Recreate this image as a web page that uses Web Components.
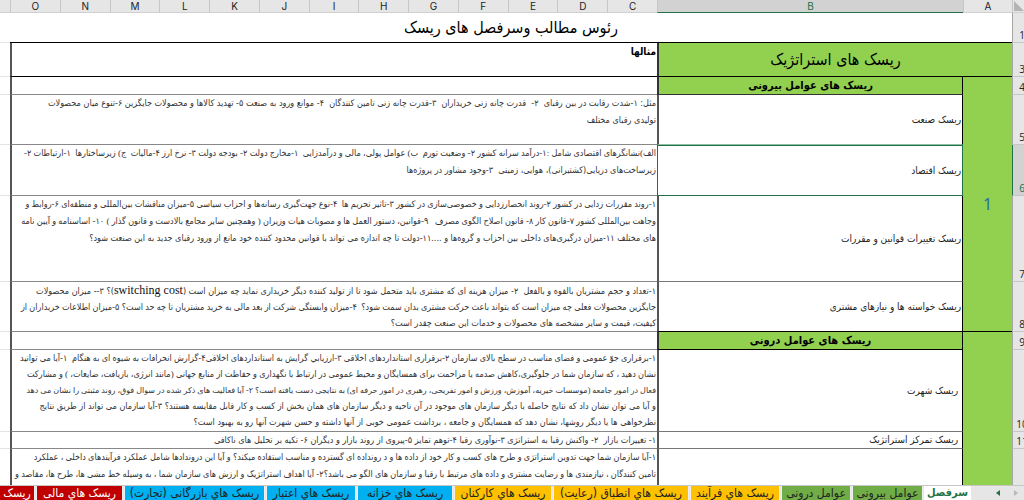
<!DOCTYPE html>
<html lang="fa">
<head>
<meta charset="utf-8">
<title>رئوس مطالب وسرفصل های ریسک</title>
<style>
  html, body { margin: 0; height: 100%; }
</style>
</head>
<body>
<risk-workbook></risk-workbook>

<template id="workbook-template">
  <style>
    :host { display: flex; flex-direction: column; height: 100vh; overflow: hidden; background: #fff; color: #222; font-family: "DejaVu Sans Condensed", "DejaVu Sans", sans-serif; }
    risk-sheet { flex: 1; min-height: 0; }
  </style>
  <risk-sheet></risk-sheet>
  <sheet-tabs>
    <sheet-tab active style="--w:47px">سرفصل</sheet-tab>
    <sheet-tab style="--w:71px;--c:#70ad47">عوامل بیرونی</sheet-tab>
    <sheet-tab style="--w:70px;--c:#70ad47">عوامل درونی</sheet-tab>
    <sheet-tab style="--w:90px;--c:#ffc000">ریسک هاي فرآیند</sheet-tab>
    <sheet-tab style="--w:136px;--c:#ffc000">ریسک هاي انطباق (رعایت)</sheet-tab>
    <sheet-tab style="--w:98px;--c:#ffc000">ریسک هاي کارکنان</sheet-tab>
    <sheet-tab style="--w:96px;--c:#00b0f0">ریسک هاي خزانه</sheet-tab>
    <sheet-tab style="--w:90px;--c:#00b0f0">ریسک هاي اعتبار</sheet-tab>
    <sheet-tab style="--w:141px;--c:#00b0f0">ریسک هاي بازرگانی (تجارت)</sheet-tab>
    <sheet-tab style="--w:87px;--c:#c00000;--t:#fff">ریسک هاي مالی</sheet-tab>
    <sheet-tab style="--w:36px;--c:#c00000;--t:#fff">ریسک</sheet-tab>
  </sheet-tabs>
</template>

<template id="sheet-template">
  <style>
    :host { display: block; overflow: hidden; direction: rtl; }
    table { width: 100%; table-layout: fixed; border-collapse: separate; border-spacing: 0; }
    th, td { box-sizing: border-box; padding: 0; font-weight: 400; }
    .rowcol { width: 12px; } .a { width: 49px; } .b { width: 306px; } .rest { width: 10px; }

    thead th { height: 13px; background: #e6e6e6; border-left: 1px solid #c6c6c6; border-bottom: 1px solid #d0d0d0; font: 10px/12px Inter, sans-serif; color: #222; }
    thead th.sel { background: #d2d2d2; color: #217346; border-bottom: 1px solid #217346; }
    thead th.rest { border-left: 0; }
    .corner svg { display: block; width: 10px; height: 10px; }

    tbody th { direction: ltr; overflow: hidden; background: #e6e6e6; border-left: 1px solid #a6a6a6; border-bottom: 1px solid #c6c6c6; vertical-align: bottom; font: 10px/14px "Open Sans", sans-serif; }
    tbody th span { display: block; width: 20px; text-align: center; }
    tbody th.sel { background: #d2d2d2; color: #217346; border-left: 1px solid #217346; }

    .title { font-size: 16px; line-height: 26px; text-align: center; border-bottom: 1px solid #000; color: #000; }
    .green { background: #92d050; text-align: center; color: #000; }
    .main { font-size: 16px; border-left: 2px solid #333; border-bottom: 1px solid #000; }
    .group { font-size: 11px; line-height: 16px; font-weight: 700; border-left: 2px solid #333; border-right: 1px solid #000; border-bottom: 1px solid #333; }
    .index { font: 16px/20px "Noto Sans", sans-serif; color: #1f6fb5; border-bottom: 1px solid #000; }
    .risk { font-size: 10px; line-height: 16px; border-left: 2px solid #555; border-right: 1px solid #000; border-bottom: 1px solid #777; padding-right: 1px; }
    .inset { padding-right: 4px; }
    .risk.sel { border: 1px solid #217346; }
    .risk.above { border-bottom-color: #8fc0a5; }
    .text { font-size: 9px; line-height: 17px; white-space: pre; vertical-align: top; border-left: 2px solid #555; border-bottom: 1px solid #888; padding-right: 1px; color: #333; }
    .tight { line-height: 16px; padding-top: 1px; }
    .dense { font-family: "Liberation Serif", "DejaVu Sans Condensed", serif; }
    .dense.small { font-family: "Liberation Serif", "DejaVu Sans", serif; font-size: 8px; line-height: 14px; }
    .heading { font-size: 10px; font-weight: 700; color: #000; }
    .strong { border-bottom-color: #000; }
    .blank { border-bottom: 1px solid #e4e4e4; }
    .latin { font-family: "Liberation Serif", serif; font-size: 12px; line-height: 14px; color: #111; }
  </style>
  <table>
    <colgroup>
      <col class="rowcol"><col class="a"><col class="b">
      <col span="13">
      <col class="rest">
    </colgroup>
    <thead></thead>
    <tbody>
      <tr style="height:30px"><th><span>1</span></th><td class="title" colspan="15">رئوس مطالب وسرفصل های ریسک</td><td class="blank"></td></tr>
      <tr style="height:34px"><th><span>3</span></th><td class="green main" colspan="2">ریسک های استراتژیک</td><td class="text heading strong" colspan="13">مثالها</td><td class="blank"></td></tr>
      <tr style="height:18px"><th><span>4</span></th><td class="green index" rowspan="5">1</td><td class="green group">ریسک های عوامل بیرونی</td><td class="text" colspan="13"></td><td class="blank"></td></tr>
      <tr style="height:50px"><th><span>5</span></th><td class="risk above">ریسک صنعت</td><td class="text" colspan="13">مثل: ۱-شدت رقابت در بین رقبای  ۲-  قدرت چانه زنی خریداران  ۳-قدرت چانه زنی تامین کنندگان  ۴- موانع ورود به صنعت ۵- تهدید کالاها و محصولات جایگزین ۶-تنوع میان محصولات<br>تولیدی رقبای مختلف</td><td class="blank"></td></tr>
      <tr style="height:51px"><th class="sel"><span>6</span></th><td class="risk sel">ریسک اقتصاد</td><td class="text" colspan="13"><span class="dense">الف)نشانگرهای اقتصادی شامل :۱-درآمد سرانه کشور ۲- وضعیت تورم  ب) عوامل پولی، مالی و درآمدزایی  ۱-مخارج دولت ۲- بودجه دولت ۳- نرخ ارز ۴-مالیات  ج) زیرساختارها  ۱-ارتباطات ۲-</span><br>زیرساخت‌های دریایی(کشتیرانی)، هوایی، زمینی  ۳-وجود مشاور در پروژه‌ها</td><td class="blank"></td></tr>
      <tr style="height:86px"><th><span>7</span></th><td class="risk">ریسک تغییرات قوانین و مقررات</td><td class="text" colspan="13"><span class="dense">۱-روند مقررات زدایی در کشور ۲-روند انحصارزدایی و خصوصی‌سازی در کشور ۳-تاثیر تحریم ها  ۴-نوع جهت‌گیری رسانه‌ها و احزاب سیاسی ۵-میزان مناقشات بین‌المللی و منطقه‌ای ۶-روابط و</span><br><span class="dense">وجاهت بین‌المللی کشور ۷-قانون کار ۸- قانون اصلاح الگوی مصرف   ۹-قوانین، دستور العمل ها و مصوبات هیات وزیران ( وهمچنین سایر مجامع بالادست و قانون گذار ) ۱۰- اساسنامه و آیین نامه</span><br>های مختلف ۱۱-میزان درگیری‌های داخلی بین احزاب و گروه‌ها و ....۱۱-دولت تا چه اندازه می تواند با قوانین محدود کننده خود مانع از ورود رقبای جدید به این صنعت شود؟</td><td class="blank"></td></tr>
      <tr style="height:50px"><th><span>8</span></th><td class="risk strong">ریسک خواسته ها و نیازهای مشتری</td><td class="text tight" colspan="13">۱-تعداد و حجم مشتریان بالقوه و بالفعل  ۲- میزان هزینه ای که مشتری باید متحمل شود تا از تولید کننده دیگر خریداری نماید چه میزان است (<span class="latin">switching cost</span>)؟ ۳-- میزان محصولات<br><span class="dense">جایگزین محصولات فعلی چه میزان است که بتواند باعث حرکت مشتری بدان سمت شود؟  ۴-میزان وابستگی شرکت از بعد مالی به خرید مشتریان تا چه حد است؟ ۵-میزان اطلاعات خریداران از</span><br>کیفیت، قیمت و سایر مشخصه های محصولات و خدمات این صنعت چقدر است؟</td><td class="blank"></td></tr>
      <tr style="height:18px"><th><span>9</span></th><td class="green" rowspan="4"></td><td class="green group strong">ریسک های عوامل درونی</td><td class="text" colspan="13"></td><td class="blank"></td></tr>
      <tr style="height:82px"><th><span>10</span></th><td class="risk inset">ریسک شهرت</td><td class="text tight" style="padding-top:0" colspan="13"><span class="dense">۱-برقراری جوّ عمومی و فضای مناسب در سطح بالای سازمان ۲-برقراری استانداردهای اخلاقی ۳-ارزیابي گرایش به استانداردهای اخلاقی۴-گزارش انحرافات به شیوه ای به هنگام  ۱-آیا می توانید</span><br><span class="dense">نشان دهید ، که سازمان شما در جلوگیری،کاهش صدمه یا مزاحمت برای همسایگان و محیط عمومی در ارتباط با نگهداری و حفاظت از منابع جهانی (مانند انرژی، بازیافت، ضایعات، ) و مشارکت</span><br><span class="dense small">فعال در امور جامعه (موسسات خیریه، آموزش، ورزش و امور تفریحی، رهبری در امور حرفه ای) به نتایجی دست یافته است؟ ۲- آیا فعالیت های ذکر شده در سوال فوق، روند مثبتی را نشان می دهد</span><br>و آیا می توان نشان داد که نتایج حاصله با دیگر سازمان های موجود در آن ناحیه و دیگر سازمان های همان بخش از کسب و کار قابل مقایسه هستند؟ ۳-آیا سازمان می تواند از طریق نتایج<br>نظرخواهی ها یا دیگر روشها، نشان دهد که همسایگان و جامعه ، برداشت عمومی خوبی از آنها داشته و حسن شهرت آنها رو به بهبود است؟</td><td class="blank"></td></tr>
      <tr style="height:17px"><th><span>11</span></th><td class="risk inset">ریسک تمرکز استراتژیک</td><td class="text tight" style="padding-top:0" colspan="13">۱- تغییرات بازار  ۲- واکنش رقبا به استراتژی ۳-نوآوری رقبا ۴-توهم تمایز ۵-پیروی از روند بازار و دیگران ۶- تکیه بر تحلیل های ناکافی</td><td class="blank"></td></tr>
      <tr style="height:50px"><th></th><td class="risk"></td><td class="text" colspan="13"><span class="dense">۱-آیا سازمان شما جهت تدوین استراتژی و طرح های کسب و کار خود از داده ها و د رونداده ای گسترده و مناسب استفاده میکند؟ و آیا این دروندادها شامل عملکرد فرآیندهای داخلی ، عملکرد</span><br><span class="dense">تامین کنندگان ، نیازمندی ها و رضایت مشتری و داده های مرتبط با رقبا و سازمان های الگو می باشد؟۲- آیا اهداف استراتژیک و ارزش های سازمان شما ، به وسیله خط مشی ها، طرح ها، مقاصد و</span></td><td class="blank"></td></tr>
    </tbody>
  </table>
</template>

<template id="tabs-template">
  <style>
    :host { display: flex; direction: rtl; height: 15px; overflow: hidden; background: #e6e6e6; border-top: 1px solid #c6c6c6; box-sizing: border-box; }
    nav { flex: none; width: 53px; display: flex; direction: ltr; justify-content: flex-end; gap: 8px; padding-right: 3px; box-sizing: border-box; }
    button { border: 0; padding: 0; background: none; width: 10px; height: 14px; display: grid; place-items: center; color: #217346; }
    button:disabled { color: #b8b8b8; }
    svg { width: 4px; height: 6px; fill: currentColor; }
    div { display: flex; flex: none; gap: 1px; }
  </style>
  <nav>
    <button aria-label="قبلی"><svg viewBox="0 0 4 6"><path d="M4 0v6L0 3z"/></svg></button>
    <button aria-label="بعدی" disabled><svg viewBox="0 0 4 6"><path d="M0 0v6l4-3z"/></svg></button>
  </nav>
  <div role="tablist"><slot></slot></div>
</template>

<template id="tab-template">
  <style>
    :host { display: block; flex: none; width: var(--w); }
    button { display: block; width: 100%; height: 14px; border: 1px solid #eee; border-width: 0 1px; padding: 0; white-space: nowrap; background: var(--c, #fff); color: var(--t, #222); font-family: inherit; font-size: 12px; line-height: 14px; text-align: center; }
    :host([active]) button { color: #217346; font-weight: 700; font-size: 11px; border-color: #fff; }
  </style>
  <button role="tab"><slot></slot></button>
</template>

<script>
  class TemplateElement extends HTMLElement {
    constructor() {
      super();
      this.attachShadow({ mode: "open" })
        .append(document.getElementById(this.constructor.template).content.cloneNode(true));
    }
  }
  class SheetTab extends TemplateElement { static template = "tab-template"; }
  class SheetTabs extends TemplateElement { static template = "tabs-template"; }
  class RiskSheet extends TemplateElement {
    static template = "sheet-template";
    constructor() {
      super();
      const letters = [..."ABCDEFGHIJKLMNO"];
      this.shadowRoot.querySelector("thead").innerHTML =
        '<tr><th class="corner"><svg viewBox="0 0 10 10"><path d="M0 10h10V0z" transform="matrix(-1 0 0 1 10 0)" fill="#b4b4b4"/></svg></th>' +
        letters.map(l => `<th${l === "B" ? ' class="sel"' : ""}>${l}</th>`).join("") +
        '<th class="rest"></th></tr>';
    }
  }
  class RiskWorkbook extends TemplateElement { static template = "workbook-template"; }
  customElements.define("sheet-tab", SheetTab);
  customElements.define("sheet-tabs", SheetTabs);
  customElements.define("risk-sheet", RiskSheet);
  customElements.define("risk-workbook", RiskWorkbook);
</script>
</body>
</html>
